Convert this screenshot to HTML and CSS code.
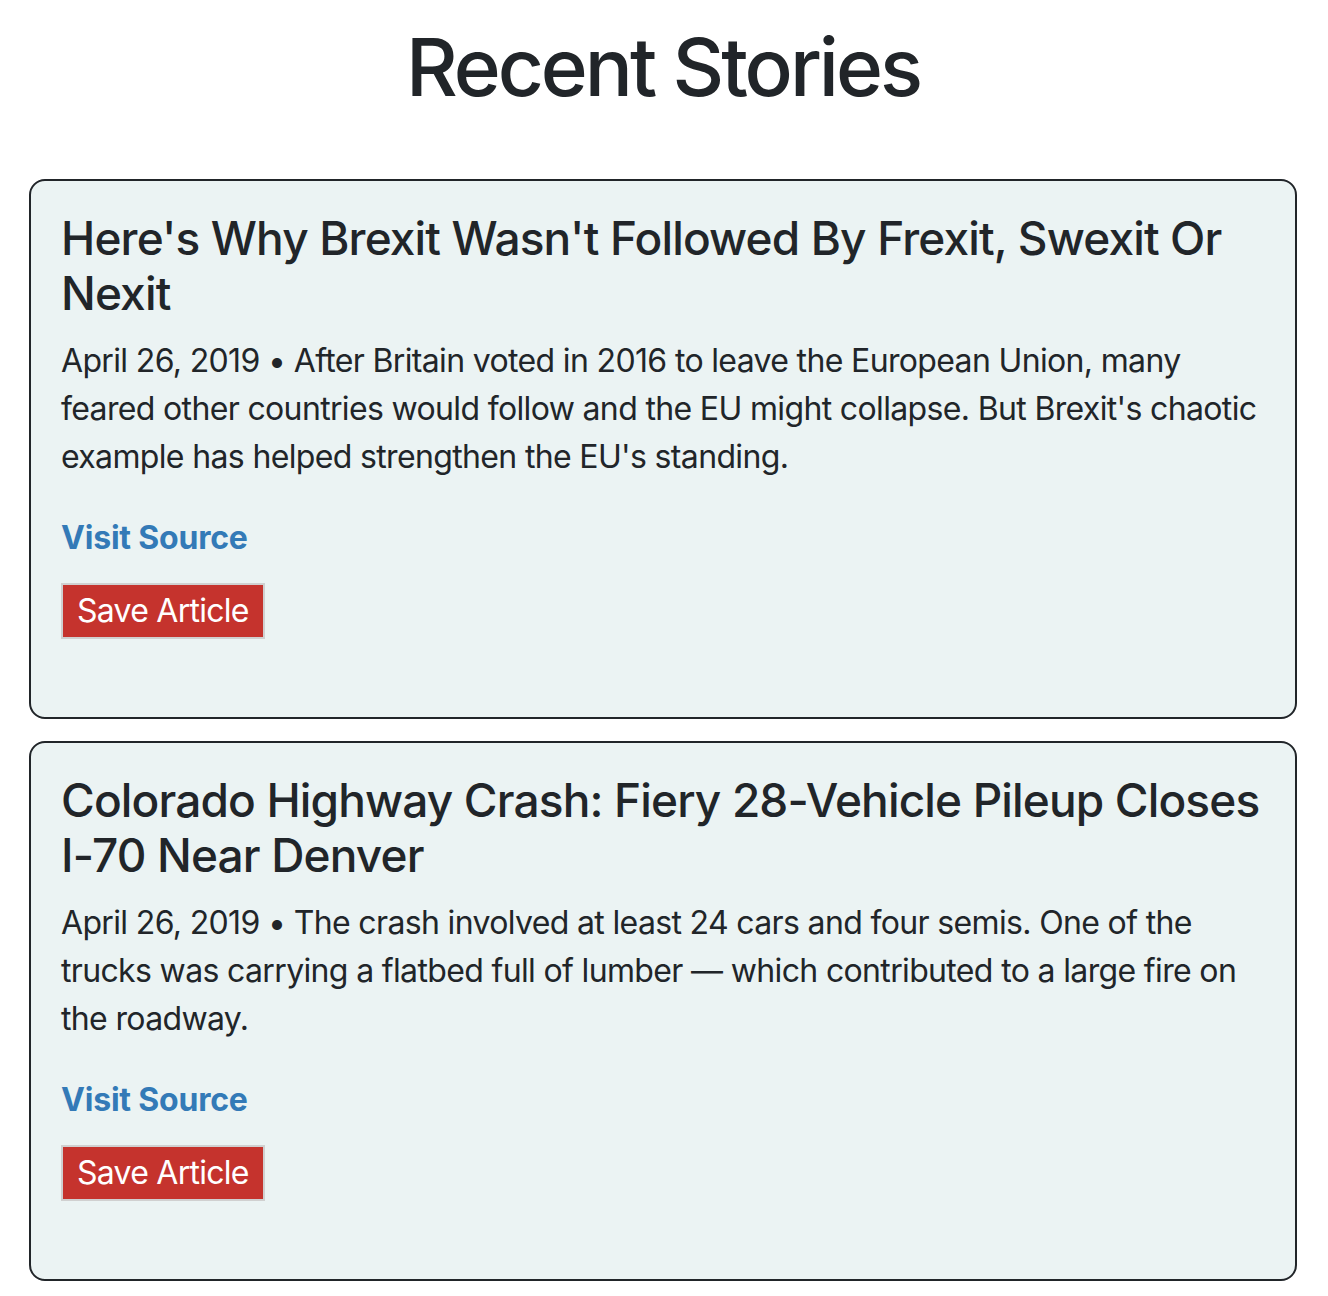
FILE: index.html
```html
<!DOCTYPE html>
<html lang="en">
<head>
<meta charset="utf-8">
<title>Recent Stories</title>
<link rel="stylesheet" href="styles.css">
</head>
<body>
<main class="page">
  <h1 class="page-title">Recent Stories</h1>
  <article class="story">
    <h2 class="story-title">Here's Why Brexit Wasn't Followed By Frexit, Swexit Or Nexit</h2>
    <p class="story-text">April 26, 2019 • After Britain voted in 2016 to leave the European Union, many feared other countries would follow and the EU might collapse. But Brexit's chaotic example has helped strengthen the EU's standing.</p>
    <a class="story-link" href="#">Visit Source</a>
    <button class="save-btn" type="button">Save Article</button>
  </article>
  <article class="story">
    <h2 class="story-title">Colorado Highway Crash: Fiery 28-Vehicle Pileup Closes I-70 Near Denver</h2>
    <p class="story-text">April 26, 2019 • The crash involved at least 24 cars and four semis. One of the trucks was carrying a flatbed full of lumber — which contributed to a large fire on the roadway.</p>
    <a class="story-link" href="#">Visit Source</a>
    <button class="save-btn" type="button">Save Article</button>
  </article>
</main>
</body>
</html>
```
FILE: styles.css
```css
html, body {
  margin: 0;
  padding: 0;
  background: #ffffff;
}
body {
  font-family: Inter, "Noto Sans", "Liberation Sans", sans-serif;
  color: #212529;
}
.page {
  padding: 19px 31px 0 29px;
  display: flex;
  flex-direction: column;
}
.page-title {
  margin: 0 0 64px;
  font-size: 80px;
  font-weight: 500;
  line-height: 96px;
  text-align: center;
  letter-spacing: -3px;
}
.story {
  border: 2px solid #212529;
  border-radius: 16px;
  background: #ebf3f3;
  padding: 30px 30px 78px;
  margin-bottom: 22px;
  display: flex;
  flex-direction: column;
  align-items: flex-start;
}
.story-title {
  margin: 0 0 16px;
  font-size: 46px;
  font-weight: 500;
  line-height: 55px;
  letter-spacing: -0.85px;
}
.story-text {
  margin: 0 0 33px;
  font-size: 32px;
  line-height: 48px;
  font-weight: 400;
  letter-spacing: -0.65px;
}
.story-link {
  font-size: 32px;
  line-height: 48px;
  font-weight: 700;
  color: #337ab7;
  text-decoration: none;
  letter-spacing: -0.2px;
}
.save-btn {
  margin-top: 21px;
  height: 56px;
  box-sizing: border-box;
  padding: 0 14px;
  border: 2px solid #d0d0d0;
  background: #c5332d;
  color: #ffffff;
  font-family: inherit;
  font-size: 32px;
  line-height: 48px;
  border-radius: 0;
  letter-spacing: -0.75px;
}
```
